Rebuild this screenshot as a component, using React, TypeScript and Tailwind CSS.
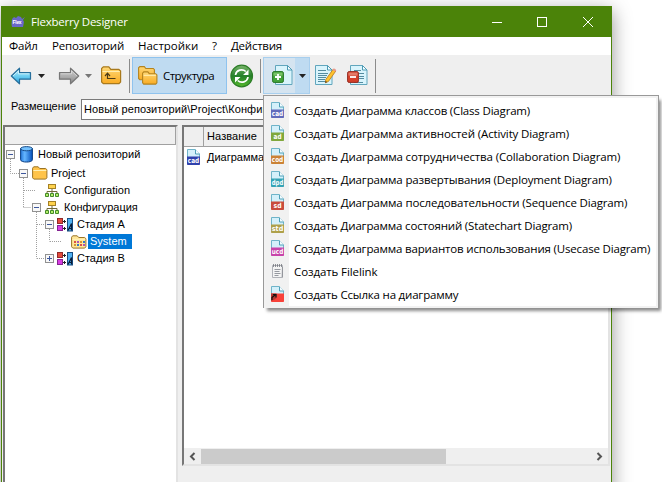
import React from "react";

const SEGOE = "font-['Open_Sans','Noto_Sans',sans-serif]";
const SANS = "font-['Liberation_Sans',Arial,sans-serif]";

function DocIcon({ label, color }: { label: string; color: string }) {
  return (
    <svg width="14" height="17" viewBox="0 0 14 17" className="shrink-0">
      <path d="M.5.5h7.500l4.500 4.500V12H.5z" fill="#d4f0fa" stroke="#6fb4c9" />
      <path d="M8.500.5v4.500h4" fill="#f4fcff" stroke="#4fa0b8" />
      <path d="M0 7.500h13v7.700q0 .8-.8.8H.8q-.8 0-.8-.8z" fill={color} />
      <text x="6.500" y="13.900" fontSize="7" fontWeight="bold" fontFamily="DejaVu Sans Condensed, DejaVu Sans, sans-serif" fill="#fff" textAnchor="middle" textLength={label.length > 2 ? 11.5 : 8} lengthAdjust="spacingAndGlyphs">{label}</text>
    </svg>
  );
}

function NoteIcon() {
  return (
    <svg width="14" height="17" viewBox="0 0 14 17" className="shrink-0">
      <path d="M1.500 2.500h10l-.5 12h-9.500z" fill="#f4f4f4" stroke="#b0b2b8" />
      <path d="M2.500 1v3M4.500 1v3M6.500 1v3M8.500 1v3M10.500 1v3" stroke="#73767c" strokeWidth=".8" />
      <path d="M3.500 6.500h6M3.500 8.500h5M3.500 10.500h6M3.500 12.500h4" stroke="#9699a0" />
      <path d="M11.500 4v10.500" stroke="#94969c" />
    </svg>
  );
}

function LinkIcon() {
  return (
    <svg width="14" height="17" viewBox="0 0 14 17" className="shrink-0">
      <path d="M.5.5h7.500l4.500 4.500V12H.5z" fill="#d4f0fa" stroke="#6fb4c9" />
      <path d="M8.500.5v4.500h4" fill="#f4fcff" stroke="#4fa0b8" />
      <path d="M0 7.500h13v7.700q0 .8-.8.8H.8q-.8 0-.8-.8z" fill="#f8423a" />
      <path d="M0 7.500h5.500v4.500q-1 1.500-5.500 3z" fill="#b63630" />
      <path d="M1 14V11.500l3.500-3M2 8.500h3v3" stroke="#111" strokeWidth="1.200" fill="none" />
    </svg>
  );
}

function Arrow({ flip }: { flip?: boolean }) {
  return (
    <svg width="22" height="20" viewBox="0 0 22 20" className={flip ? "-scale-x-100" : ""}>
      <defs>
        <linearGradient id={flip ? "ag" : "ab"} x1="0" y1="0" x2="0" y2="1">
          <stop offset="0" stopColor={flip ? "#c9c9c9" : "#c5effb"} />
          <stop offset=".5" stopColor={flip ? "#b0b0b0" : "#70d0f2"} />
          <stop offset="1" stopColor={flip ? "#858585" : "#22a0dc"} />
        </linearGradient>
      </defs>
      <path d="M1.300 10 9.500 2.200v4.500H20.500v6.500H9.500v4.600z" fill={flip ? "url(#ag)" : "url(#ab)"} stroke={flip ? "#777" : "#276f9c"} strokeWidth="1.200" strokeLinejoin="round" />
      <path d="M3 10 8.500 4.800v3H19.400" fill="none" stroke={flip ? "#dedede" : "#dcf8ff"} strokeWidth=".8" />
    </svg>
  );
}

function Caret({ color }: { color: string }) {
  return (
    <svg width="7" height="4" viewBox="0 0 7 4"><path d="M0 0h7L3.500 4z" fill={color} /></svg>
  );
}

function FolderGradient({ id }: { id: string }) {
  return (
    <linearGradient id={id} x1="0" y1="0" x2="0" y2="1">
      <stop offset="0" stopColor="#ffd876" />
      <stop offset="1" stopColor="#f9ab22" />
    </linearGradient>
  );
}

function FolderUp() {
  return (
    <svg width="21" height="19" viewBox="0 0 21 19">
      <defs><FolderGradient id="fu" /></defs>
      <path d="M.6 16V2.500L2.300.8h5.500l2 2.500h8l1.800 1.800V16l-1.600 1.700H2.300z" fill="url(#fu)" stroke="#a97a1d" strokeWidth="1.200" />
      <path d="M1.500 5.500h17.300" stroke="#ffedb0" />
      <path d="M14.500 12.500H6.500V8M4 10l2.500-2.800L9 10" fill="none" stroke="#4d3b15" strokeWidth="1.200" />
    </svg>
  );
}

function Folders() {
  return (
    <svg width="20" height="19" viewBox="0 0 20 19">
      <defs><FolderGradient id="fs" /></defs>
      <path d="M.6 12.500V1.800L1.800.6h4.500l1.500 1.900h7.500l1.100 1.200v8.800l-1.200 1.200H1.800z" fill="url(#fs)" stroke="#b4831e" strokeWidth="1.100" />
      <path d="M4.600 16.800V7.200l1.200-1.300h4l1.500 1.800h6.400l1.200 1.200v7.900l-1.200 1.300h-12z" fill="url(#fs)" stroke="#b4831e" strokeWidth="1.100" />
      <path d="M5.600 9.300h12.300" stroke="#fff0b8" />
    </svg>
  );
}

function Refresh() {
  return (
    <svg width="24" height="24" viewBox="0 0 24 24">
      <defs>
        <linearGradient id="rf" x1="0" y1="0" x2="0" y2="1">
          <stop offset="0" stopColor="#7ab56b" />
          <stop offset=".5" stopColor="#24802a" />
          <stop offset="1" stopColor="#56ba2c" />
        </linearGradient>
      </defs>
      <circle cx="11.700" cy="12" r="10.800" fill="url(#rf)" stroke="#2d7d28" strokeWidth="1.200" />
      <path d="M5.500 11c.7-5 6.800-6.800 10.300-3.500M18 13c-.7 5-6.800 6.800-10.300 3.500" fill="none" stroke="#fff" strokeWidth="1.700" />
      <path d="M18.500 5.500v5.500h-5.500zM5 18.500v-5.500h5.500z" fill="#fff" />
    </svg>
  );
}

function Sheet() {
  return (
    <>
      <path d="M.5.500h12l4.500 4.500v14.500H.500z" fill="#d9f4fc" stroke="#61a6bd" />
      <path d="M12.500.500V5H17z" fill="#f5fdff" stroke="#4c9ab4" />
    </>
  );
}

function AddDoc() {
  return (
    <svg width="22" height="21" viewBox="0 0 22 21">
      <g transform="translate(3.000 0)"><Sheet /></g>
      <rect x=".6" y="6.600" width="10.800" height="10.800" rx="1.500" fill="#43a33b" stroke="#267525" />
      <path d="M1.500 7.600h9v3h-9z" fill="#7ac269" />
      <path d="M6 9v6M3 12h6" stroke="#fff" strokeWidth="1.800" />
    </svg>
  );
}

function EditDoc() {
  return (
    <svg width="22" height="21" viewBox="0 0 22 21">
      <Sheet />
      <path d="M3 5.500h8M3 8.500h10M3 10.500h9M3 12.500h8M3 14.500h7M3 16.500h8" stroke="#548ca0" />
      <path d="m18.200 4.200 2.600 1.800-7.400 10.500-3 1.300.3-3.200z" fill="#ffc22c" stroke="#b6771d" strokeWidth=".8" />
      <path d="m17.600 5 2.700 1.800 1-1.500q-1-2-2.600-1.800z" fill="#e9968b" />
      <path d="m10.300 17.900.3-2 1.500 1.100z" fill="#403426" />
    </svg>
  );
}

function RemoveDoc() {
  return (
    <svg width="21" height="21" viewBox="0 0 21 21">
      <g transform="translate(3 0)"><Sheet /></g>
      <path d="M7 5.500h7M7 8.500h10M12 11.500h5M12 13.500h5M7 17.500h9" stroke="#548ca0" />
      <rect x=".6" y="6.600" width="10.800" height="10.800" rx="1.500" fill="#d43f29" stroke="#942b21" />
      <path d="M1.500 7.600h9v3h-9z" fill="#e27b68" />
      <path d="M3 12h6" stroke="#fff" strokeWidth="1.800" />
    </svg>
  );
}

function Expander({ plus }: { plus?: boolean }) {
  return (
    <svg width="9" height="9" viewBox="0 0 9 9" className="relative shrink-0">
      <rect x=".5" y=".5" width="8" height="8" fill="#f8f8f8" stroke="#919191" />
      <path d={plus ? "M2 4.500h5M4.500 2v5" : "M2 4.500h5"} stroke="#3d579d" />
    </svg>
  );
}

function Cylinder() {
  return (
    <svg width="13" height="17" viewBox="0 0 13 17">
      <defs>
        <linearGradient id="cy"><stop offset="0" stopColor="#2577d9" /><stop offset=".35" stopColor="#65b6ff" /><stop offset="1" stopColor="#0751bb" /></linearGradient>
      </defs>
      <path d="M.6 2.500v11.300c0 3 11.800 3 11.800 0V2.500z" fill="url(#cy)" stroke="#093f85" />
      <ellipse cx="6.500" cy="2.700" rx="5.900" ry="2.100" fill="#76c3ff" stroke="#174a86" />
    </svg>
  );
}

function SmallFolder({ dots }: { dots?: boolean }) {
  return (
    <svg width="16" height="14" viewBox="0 0 16 14">
      <path d="M.6 11.800V2.200L1.700.8h4.500l1.500 1.700h6l1.200 1.200v8.100l-1.200 1.300H1.800z" fill={dots ? "#ffe79a" : "#ffc44a"} stroke="#9b7425" />
      <path d="M1.300 4.500h13" stroke="#fff0b4" />
      {dots && (
        <g>
          <path d="M3 6h2v2H3zM9 9h2v2H9z" fill="#db5044" />
          <path d="M6 6h2v2H6zM12 9h2v2h-2z" fill="#ae51ba" />
          <path d="M9 6h2v2H9zM3 9h2v2H3z" fill="#d89632" />
          <path d="M12 6h2v2h-2zM6 9h2v2H6z" fill="#347ac7" />
        </g>
      )}
    </svg>
  );
}

function ConfigIcon() {
  return (
    <svg width="14" height="13" viewBox="0 0 14 13">
      <path d="M7 5v5M2 10V7.500h10V10" fill="none" stroke="#706a3b" />
      <rect x="3.500" y=".5" width="7" height="4" fill="#ffd34e" stroke="#a58127" />
      <path d="M.5 9.500h3v3h-3zM5.500 9.500h3v3h-3zM10.500 9.500h3v3h-3z" fill="#b3ef6a" stroke="#458a28" />
    </svg>
  );
}

function StageIcon() {
  return (
    <svg width="16" height="14" viewBox="0 0 16 14">
      <rect x=".5" y=".5" width="5" height="5" fill="#e44a3b" stroke="#922b29" />
      <rect x=".5" y="7.500" width="5" height="5" fill="#d83de1" stroke="#842491" />
      <path d="M6 3.500h3M7.500 2v3M6 10.500h3M7.500 9v3" stroke="#222" />
      <rect x="10.500" y=".5" width="5" height="12.500" fill="#50b1f2" stroke="#174d83" />
      <path d="m11 12.500 3.500-7v7M12 10.500h2.500" fill="none" stroke="#081b38" strokeWidth="1.200" />
    </svg>
  );
}

type Node = { text: string; pad: string; box?: "minus" | "plus"; gap: string; icon: React.ReactNode; h: string; sel?: boolean; tr: string };

const nodes: Node[] = [
  { text: "Новый репозиторий", pad: "pl-[1px]", box: "minus", gap: "ml-[5px] w-[16px]", icon: <Cylinder />, h: "h-[19px]", tr: "tracking-[0.03px]" },
  { text: "Project", pad: "pl-[14px]", box: "minus", gap: "ml-[4px] w-[17px]", icon: <SmallFolder />, h: "h-[18px]", tr: "tracking-normal" },
  { text: "Configuration", pad: "pl-[27px]", gap: "ml-[4px] w-[17px]", icon: <ConfigIcon />, h: "h-[17px]", tr: "tracking-[0.05px]" },
  { text: "Конфигурация", pad: "pl-[27px]", box: "minus", gap: "ml-[4px] w-[17px]", icon: <ConfigIcon />, h: "h-[17px]", tr: "tracking-normal" },
  { text: "Стадия A", pad: "pl-[40px]", box: "minus", gap: "ml-[3px] w-[18px]", icon: <StageIcon />, h: "h-[17px]", tr: "tracking-normal" },
  { text: "System", pad: "pl-[53px]", gap: "ml-[4px] w-[17px]", icon: <SmallFolder dots />, h: "h-[17px]", sel: true, tr: "tracking-normal" },
  { text: "Стадия B", pad: "pl-[40px]", box: "plus", gap: "ml-[3px] w-[18px]", icon: <StageIcon />, h: "h-[17px]", tr: "tracking-normal" },
];

const items: { text: string; label?: string; color?: string; kind?: string; tr: string }[] = [
  { text: "Создать Диаграмма классов (Class Diagram)", label: "cad", color: "#606bbb", tr: "tracking-[-0.18px]" },
  { text: "Создать Диаграмма активностей (Activity Diagram)", label: "ad", color: "#80a83c", tr: "tracking-[-0.13px]" },
  { text: "Создать Диаграмма сотрудничества (Collaboration Diagram)", label: "cod", color: "#cb8236", tr: "tracking-[-0.14px]" },
  { text: "Создать Диаграмма развертывания (Deployment Diagram)", label: "dpd", color: "#35a3b5", tr: "tracking-[-0.15px]" },
  { text: "Создать Диаграмма последовательности (Sequence Diagram)", label: "sd", color: "#c94c3d", tr: "tracking-[-0.15px]" },
  { text: "Создать Диаграмма состояний (Statechart Diagram)", label: "std", color: "#aea04a", tr: "tracking-[-0.17px]" },
  { text: "Создать Диаграмма вариантов использования (Usecase Diagram)", label: "ucd", color: "#c744aa", tr: "tracking-[-0.17px]" },
  { text: "Создать Filelink", kind: "note", tr: "tracking-[-0.1px]" },
  { text: "Создать Ссылка на диаграмму", kind: "link", tr: "tracking-[-0.19px]" },
];

function Separator({ className }: { className: string }) {
  return <div className={`h-[34px] w-px shrink-0 bg-[#8b8b8b] ${className}`} />;
}

export default function App() {
  return (
    <div className={`relative h-[482px] w-[662px] overflow-hidden bg-white pl-px pt-[6px] text-black ${SEGOE}`}>
      <div className="flex h-[490px] w-[611px] flex-col border-x border-[#4b8309] bg-[#efefef] shadow-[0_5px_18px_rgba(0,0,0,0.42)]">
        <div className="flex h-[31px] shrink-0 items-center bg-[#4b8309] pl-[9px] text-white">
          <svg width="15" height="14" viewBox="0 0 15 14">
            <path d="m1 4 2-2 2 1 2-2 3 1 1 2 3-2-2 3 1 2-1 5H1L.500 9z" fill="#6968c9" />
            <text x="1.600" y="8.500" fontSize="5" fontWeight="bold" fontFamily="Liberation Sans" fill="#fff" textLength="9">Flex</text>
          </svg>
          <span className="ml-[5px] text-[11.5px] leading-none tracking-[-0.22px]">Flexberry Designer</span>
          <svg width="102" height="12" viewBox="0 0 102 12" className="ml-auto mr-[17px]" fill="none" stroke="#fff">
            <path d="M0 6.500h10" /><rect x="45.500" y="1.500" width="9" height="9" /><path d="m91 1 10 10M101 1 91 11" />
          </svg>
        </div>

        <div className="flex h-[18px] shrink-0 items-center bg-white pl-[7px] text-[11.5px] leading-none">
          <span className="w-[43px] tracking-[-0.2px]">Файл</span>
          <span className="w-[86px] tracking-[-0.2px]">Репозиторий</span>
          <span className="w-[74px]">Настройки</span>
          <span className="w-[19px]">?</span>
          <span className="tracking-[-0.25px]">Действия</span>
        </div>

        <div className="flex h-[41px] shrink-0 items-center pl-[8px]">
          <Arrow />
          <div className="ml-[6px]"><Caret color="#222" /></div>
          <div className="ml-[13px]"><Arrow flip /></div>
          <div className="ml-[5px]"><Caret color="#777" /></div>
          <div className="ml-[9px]"><FolderUp /></div>
          <Separator className="ml-[7px]" />
          <div className="ml-[2px] flex h-[37px] w-[95px] items-center border border-[#8fc3ee] bg-[#bfdbf1] pl-[5px] text-[11.5px]">
            <Folders />
            <span className="ml-[5px] leading-none tracking-[-0.55px]">Структура</span>
          </div>
          <div className="ml-[3px]"><Refresh /></div>
          <Separator className="ml-[6px]" />
          <div className="ml-[2px] flex h-[37px] w-[47px] border border-[#a8cfee] bg-[#d5e4f0]">
            <div className="flex w-[31px] items-center pl-[8px]"><AddDoc /></div>
            <div className="flex flex-1 items-center justify-center bg-[#bfdbf1]"><Caret color="#222" /></div>
          </div>
          <div className="ml-[5px]"><EditDoc /></div>
          <div className="ml-[10px]"><RemoveDoc /></div>
          <Separator className="ml-[7px]" />
        </div>

        <div className={`flex h-[29px] shrink-0 items-start pl-[9px] text-[11px] ${SANS}`}>
          <span className="mt-[5px] w-[70px] leading-none">Размещение</span>
          <div className="mt-[3px] flex h-[21px] w-[500px] items-center whitespace-nowrap border border-[#7a7a7a] bg-white pl-[2px] leading-none tracking-[0.08px]">Новый репозиторий\Project\Конфиг</div>
        </div>

        <div className={`flex min-h-0 flex-1 pl-px text-[11px] ${SANS}`}>
          <div className="flex w-[175px] shrink-0 flex-col border-l-2 border-r-2 border-t-2 border-l-[#777] border-r-[#e3e3e3] border-t-[#777] bg-white">
            <div className="h-[18px] shrink-0 border-b border-r border-[#a0a0a0] bg-[#efefef]" />
            <div className="relative">
              <svg width="90" height="130" viewBox="5 145 90 130" className="absolute left-0 top-0" stroke="#a0a0a0" strokeDasharray="1 1" fill="none">
                <path d="M10.500 159v14.500H19M23.500 178v29.500M24 190.500h12M23.500 207.500h8M36.500 212v46.500M37 224.500h8M37 258.500h8M49.500 229v12.500M50 241.500h12" />
              </svg>
              {nodes.map((n) => (
                <div key={n.text} className={`relative flex items-center ${n.h} ${n.pad}`}>
                  {n.box ? <Expander plus={n.box === "plus"} /> : <span className="w-[9px] shrink-0" />}
                  <span className={`shrink-0 ${n.gap}`}>{n.icon}</span>
                  <span className={`flex h-[15px] items-center whitespace-nowrap px-[2px] leading-none ${n.tr} ${n.sel ? "bg-[#0078d7] pr-[5px] text-white" : ""}`}>{n.text}</span>
                </div>
              ))}
            </div>
          </div>

          <div className="ml-[4px] flex h-[341px] w-[428px] shrink-0 flex-col border-2 border-b-[#e3e3e3] border-l-[#777] border-r-[#e3e3e3] border-t-[#777] bg-white">
            <div className="flex h-[20px] shrink-0 items-center border-b border-[#a0a0a0] bg-[#efefef]">
              <div className="h-full w-[20px] border-r border-[#a0a0a0]" />
              <span className="ml-[3px] leading-none tracking-[0.1px]">Название</span>
            </div>
            <div className="flex h-[20px] items-center pl-[3px]">
              <DocIcon label="cad" color="#3041ac" />
              <span className="ml-[6px] leading-none">Диаграмма</span>
            </div>
            <div className="mt-auto flex h-[16px] shrink-0 items-center bg-[#efefef]">
              <svg width="17" height="15" viewBox="0 0 17 15" fill="none" stroke="#555" strokeWidth="2"><path d="M10.500 4 7 7.500l3.500 3.500" /></svg>
              <div className="h-[15px] w-[245px] bg-[#cbcbcb]" />
              <svg width="17" height="15" viewBox="0 0 17 15" className="ml-auto" fill="none" stroke="#555" strokeWidth="2"><path d="M6.500 4 10 7.500 6.500 11" /></svg>
            </div>
          </div>
        </div>
      </div>

      <div className="absolute left-[263px] top-[95px] flex h-[213px] w-[396px] flex-col border border-[#999] bg-white shadow-[3px_4px_3px_-1px_rgba(0,0,0,0.45)]">
        <div className="flex flex-1 flex-col border-2 border-[#f2f2f2] pt-px">
          {items.map((it) => (
            <div key={it.text} className="flex h-[23px] shrink-0 items-center">
              <div className="-mt-px flex h-[24px] w-[23px] shrink-0 items-center bg-[#f1f1f1] pl-[5px]">
                {it.kind === "note" ? <NoteIcon /> : it.kind === "link" ? <LinkIcon /> : <DocIcon label={it.label!} color={it.color!} />}
              </div>
              <span className={`ml-[5px] whitespace-nowrap text-[11.5px] leading-none ${it.tr}`}>{it.text}</span>
            </div>
          ))}
        </div>
      </div>
    </div>
  );
}
